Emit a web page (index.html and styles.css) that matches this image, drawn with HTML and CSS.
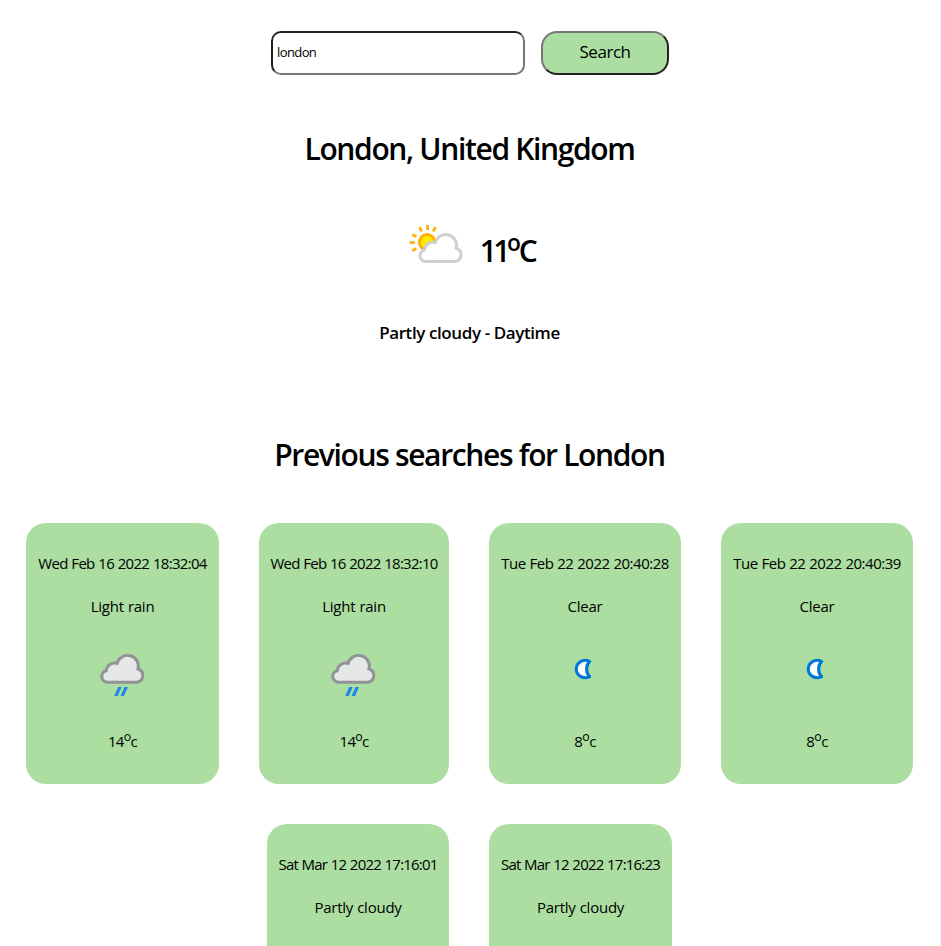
FILE: index.html
```html
<!DOCTYPE html>
<html lang="en">
<head>
<meta charset="utf-8">
<title>Weather</title>
<link rel="stylesheet" href="styles.css">
</head>
<body>
<svg class="defs" width="0" height="0">
  <defs>
    <path id="cloud" d="M7 28.4A5.8 5.8 0 0 1 5.8 17A8.6 8.6 0 0 1 16.8 9.6A10.6 10.6 0 0 1 37.7 15.2A6.8 6.8 0 0 1 36.8 28.4Z"/>
    <g id="rain">
      <use href="#cloud" x="9.3" y="17.8" fill="#e6e7e9" stroke="#919396" stroke-width="3"/>
      <path d="M27.2 51h3.5l-4 9h-3.5zM33.5 51h3.5l-4 9h-3.5z" fill="#1e88e5"/>
    </g>
    <path id="moon" d="M36.7 25.4C30 22 23.3 26.7 23.3 33S30 44 36.7 40.6C32.6 36.8 32.6 29.2 36.7 25.4Z" fill="#fff" stroke="#0078d7" stroke-width="3.1" stroke-linejoin="round"/>
  </defs>
</svg>
<form class="search">
  <input class="search-input" type="text" value="london" aria-label="City">
  <button class="search-button" type="button">Search</button>
</form>
<main>
  <h1 class="place">London, United Kingdom</h1>
  <div class="current">
    <svg class="icon" viewBox="0 0 64 64">
      <circle cx="23.2" cy="30.3" r="7.8" fill="#ffeb00" stroke="#ffb000" stroke-width="2.8"/>
      <path d="M23.5 13v5M31.5 15.3l-2.3 4.1M15.4 15.3l2.3 4.1M8.3 22.4l4.1 2.3M5.8 30.7h5M8.3 38.8l4.1-2.4" stroke="#ffb000" stroke-width="2.8"/>
      <use href="#cloud" x="14.5" y="21" fill="#fff" stroke="#d0d0d0" stroke-width="3"/>
    </svg>
    <h1 class="temp">11<sup>o</sup>C</h1>
  </div>
  <h3 class="summary">Partly cloudy - Daytime</h3>
  <h1 class="history-title">Previous searches for London</h1>
  <section class="history">
    <article class="card card-wed">
      <p>Wed Feb 16 2022 18:32:04</p><p>Light rain</p>
      <svg class="icon" viewBox="0 0 64 64"><use href="#rain"/></svg>
      <p class="degrees">14<sup>o</sup>c</p>
    </article>
    <article class="card card-wed-late">
      <p>Wed Feb 16 2022 18:32:10</p><p>Light rain</p>
      <svg class="icon" viewBox="0 0 64 64"><use href="#rain"/></svg>
      <p class="degrees">14<sup>o</sup>c</p>
    </article>
    <article class="card card-tue">
      <p>Tue Feb 22 2022 20:40:28</p><p>Clear</p>
      <svg class="icon" viewBox="0 0 64 64"><use href="#moon"/></svg>
      <p class="degrees">8<sup>o</sup>c</p>
    </article>
    <article class="card card-tue">
      <p>Tue Feb 22 2022 20:40:39</p><p>Clear</p>
      <svg class="icon" viewBox="0 0 64 64"><use href="#moon"/></svg>
      <p class="degrees">8<sup>o</sup>c</p>
    </article>
    <article class="card card-sat">
      <p>Sat Mar 12 2022 17:16:01</p><p>Partly cloudy</p>
    </article>
    <article class="card card-sat-late">
      <p>Sat Mar 12 2022 17:16:23</p><p>Partly cloudy</p>
    </article>
  </section>
</main>
</body>
</html>
```
FILE: styles.css
```css
* { box-sizing: border-box; }
html { overflow: hidden; }
body {
  margin: 0;
  height: 946px;
  overflow: hidden;
  border-right: 1px solid #eee;
  background: #fff;
  color: #000;
  font-family: "Open Sans", sans-serif;
  text-align: center;
}
main { height: 871px; padding-right: 1px; overflow: hidden; }
.defs { display: block; }
.search {
  display: flex;
  justify-content: center;
  gap: 16px;
  padding-top: 31px;
}
.search-input {
  width: 254px;
  height: 44px;
  padding: 0 4px 2px;
  border: 2px inset #767676;
  border-radius: 10px;
  font: 13px "Open Sans", sans-serif;
  letter-spacing: -0.6px;
}
.search-button {
  width: 128px;
  height: 44px;
  padding: 0 0 3px;
  border: 2px outset #767676;
  border-radius: 16px;
  background: #abdea0;
  color: #000;
  font: 17px "Open Sans", sans-serif;
  letter-spacing: -0.45px;
}
h1, h3, p { margin: 0; white-space: nowrap; }
h1 { font-size: 30px; font-weight: 600; line-height: 54px; letter-spacing: -1.35px; }
.place { padding-top: 47px; }
.current {
  display: flex;
  justify-content: center;
  gap: 11px;
  margin-top: 36px;
}
.temp { width: 56px; margin-top: 12px; letter-spacing: -3.6px; }
sup { font-size: 0.83em; line-height: 0; vertical-align: super; }
.temp sup { font-size: 0.76em; letter-spacing: -2px; }
.icon { width: 64px; height: 64px; fill: none; }
.summary {
  margin-top: 40px;
  font-size: 17px;
  font-weight: 600;
  line-height: 30px;
  letter-spacing: -0.4px;
}
.history-title { margin-top: 80px; }
.history {
  display: flex;
  flex-wrap: wrap;
  justify-content: center;
  gap: 40px;
  margin-top: 41px;
}
.card {
  display: flex;
  flex-direction: column;
  align-items: center;
  width: 192px;
  height: 261px;
  padding-top: 27px;
  border-radius: 20px;
  background: #abdea0;
  font-size: 15px;
  line-height: 27px;
  letter-spacing: -0.75px;
  word-spacing: 0.5px;
}
.card p + p { margin-top: 16px; letter-spacing: -0.25px; }
.card .icon { margin-top: 16px; }
.card .degrees { margin-top: 28px; }
.card-wed { width: 193px; letter-spacing: -0.7px; }
.card-wed-late { width: 190px; }
.card-tue { letter-spacing: -0.5px; }
.card-sat { width: 182px; letter-spacing: -0.8px; }
.card-sat-late { width: 183px; letter-spacing: -0.8px; }
```
